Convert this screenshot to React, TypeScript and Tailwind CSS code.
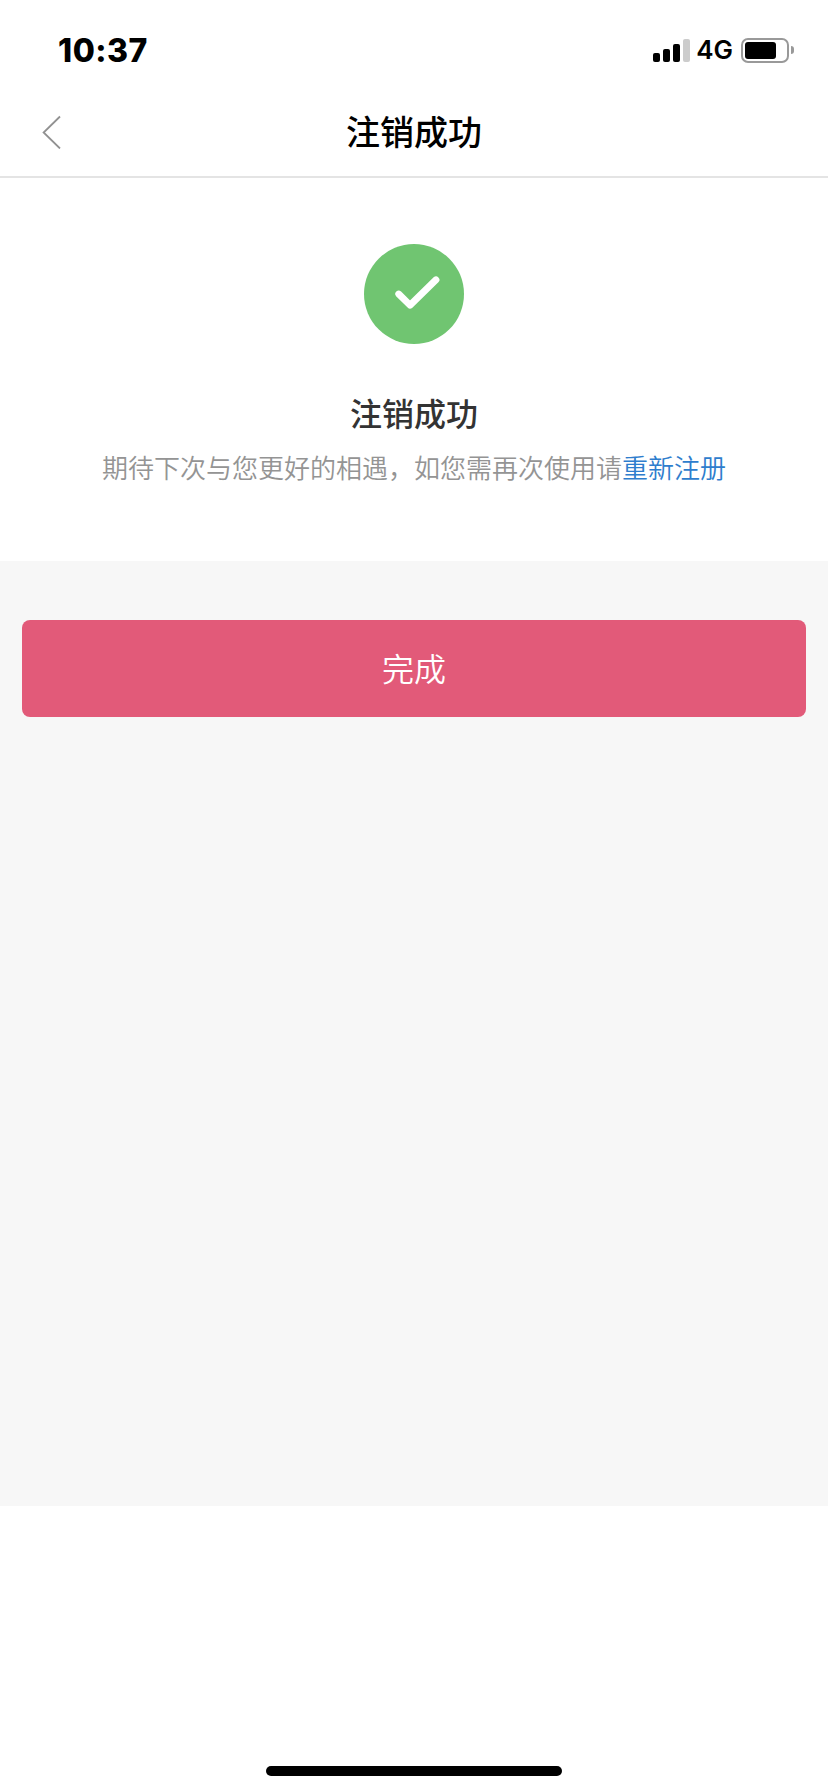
import { useState } from "react";

// Barres de réseau : hauteur + couleur
const signalBars = [
  { id: 1, className: "h-[9px] bg-black" },
  { id: 2, className: "h-[13px] bg-black" },
  { id: 3, className: "h-[18px] bg-black" },
  { id: 4, className: "h-[23px] bg-[#cccccc]" },
];

export default function PageAccountClosed() {
  const [done, setDone] = useState(false);

  return (
    <div className="flex h-[1792px] w-[828px] flex-col bg-white font-['Noto_Sans_CJK_SC',sans-serif]">
      <StatusBar />

      <header className="grid h-[90px] grid-cols-3 items-center border-b-2 border-[#e4e4e4]">
        <button type="button" aria-label="返回" className="pl-[42px]">
          <svg className="h-[34px] w-5" viewBox="0 0 20 34" fill="none" stroke="#919191" strokeWidth={1.8}>
            <path d="M18 1.5L1.6 17.5L18 33.5" />
          </svg>
        </button>
        <h1 className="pb-0.5 text-center text-[34px] leading-[50px] font-medium text-black">注销成功</h1>
      </header>

      <main className="flex h-[1328px] flex-col bg-[#f7f7f7]">
        <section className="flex h-[383px] flex-col items-center bg-white pt-[66px]">
          <svg className="h-[100px] w-[100px]" viewBox="0 0 100 100" fill="none">
            <circle cx="50" cy="50" r="50" fill="#70c571" />
            <path d="M34.7 50L46 61.2L72 35.8" stroke="white" strokeWidth={6.8} strokeLinecap="round" strokeLinejoin="round" />
          </svg>
          <h2 className="mt-11 text-[32px] leading-[48px] font-medium text-[#333333]">注销成功</h2>
          <p className="mt-[11px] text-[26px] leading-10 font-[350] text-[#949494]">
            {"期待下次与您更好的相遇\uFF0C如您需再次使用请"}
            <a href="#register" className="text-[#2e7dcd]">重新注册</a>
          </p>
        </section>

        <button
          type="button"
          disabled={done}
          onClick={() => setDone(true)}
          className="mx-[22px] mt-[59px] h-[97px] rounded-lg bg-[#e25a79] pb-1 text-[32px] leading-[48px] font-[350] text-white"
        >
          完成
        </button>
      </main>

      <footer className="mt-auto flex justify-center pb-4">
        <div className="h-2.5 w-[296px] rounded-full bg-black" />
      </footer>
    </div>
  );
}

function StatusBar() {
  return (
    <div className="flex h-[88px] items-center justify-between pt-3 pr-[34px] pl-[58px] font-[Inter,sans-serif] text-black">
      <span className="pt-px text-[32px] leading-[38px] font-extrabold tracking-[0.5px]">10:37</span>

      <div className="flex items-center">
        <div className="flex h-[23px] items-end gap-[3px]">
          {signalBars.map((bar) => (
            <span key={bar.id} className={`w-[7px] rounded-[2px] ${bar.className}`} />
          ))}
        </div>
        <span className="ml-1.5 text-[26px] leading-[30px] font-semibold">4G</span>

        {/* Batterie */}
        <div className="ml-2 flex h-[25px] w-12 items-center rounded-[7px] border-2 border-[#999999] pl-0.5">
          <div className="h-[17px] w-[31px] rounded-[3px] bg-black" />
        </div>
        <div className="ml-0.5 h-2 w-[3px] rounded-r-full bg-[#999999]" />
      </div>
    </div>
  );
}
